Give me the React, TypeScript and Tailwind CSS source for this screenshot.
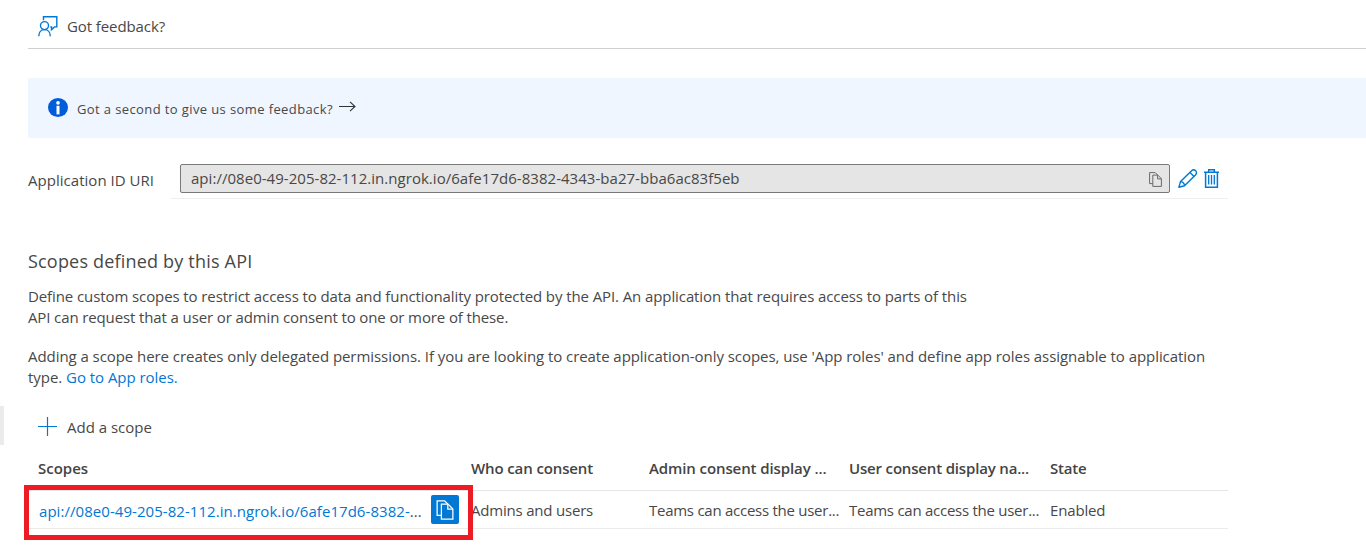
import type { ReactNode } from "react";

function FeedbackIcon() {
  return (
    <svg width="20" height="21" viewBox="0 0 20 21" fill="none" stroke="#0078d4" strokeWidth="1.4">
      <path d="M5.5 4.2V.7h13.3v10.2h-2.3l-3 2.7v-2.7h-1.3" />
      <circle cx="6.5" cy="9.6" r="4" />
      <path d="M.8 20.2c0-4 2.3-6.6 5.7-6.6s5.8 2.6 5.8 6.6" />
    </svg>
  );
}

function InfoIcon() {
  return (
    <svg width="20" height="19" viewBox="0 0 20 19">
      <ellipse cx="10" cy="9.5" rx="10" ry="9.5" fill="#015cda" />
      <circle cx="10" cy="4.9" r="1.8" fill="#fff" />
      <rect x="8.5" y="7.8" width="3" height="8.6" fill="#fff" />
    </svg>
  );
}

function CopyIcon({ width, height, sw }: { width: number; height: number; sw: number }) {
  return (
    <svg width={width} height={height} viewBox="0 0 13 15" fill="none" stroke="currentColor" strokeWidth={sw}>
      <path d="M3.8 11.6H.6V.6h5.6l2.4 2.4" />
      <path d="M3.8 3.1h5l3.6 3.6v7.7H3.8z" />
      <path d="M8.6 3.1v3.8h3.8" />
    </svg>
  );
}

function PencilIcon() {
  return (
    <svg width="20" height="19" viewBox="0 0 20 19" fill="none" stroke="#0078d4" strokeWidth="1.4" strokeLinejoin="round">
      <path d="M.9 18.2l1.6-5.6L13.6 1.7a2.7 2.7 0 0 1 4.1 4L6.5 16.7z" />
      <path d="M12 3.4l4 4M2.5 12.6c2 0 4 2 4 4.1" />
    </svg>
  );
}

function TrashIcon() {
  return (
    <svg width="15" height="19" viewBox="0 0 15 19" fill="none" stroke="#0078d4" strokeWidth="1.5">
      <path d="M0 3.2h15M4.7 3V.8h5.6V3M1.6 3.2v15h11.8v-15" />
      <path d="M4.7 6v9.6M7.5 6v9.6M10.3 6v9.6" strokeWidth="1.3" />
    </svg>
  );
}

function Row({ children, className }: { children: ReactNode; className: string }) {
  return (
    <div className={`grid w-[1200px] grid-cols-[443px_178px_200px_201px_178px] border-b whitespace-nowrap ${className}`}>
      {children}
    </div>
  );
}

export default function App() {
  return (
    <main className="relative h-[549px] w-[1366px] overflow-hidden bg-white pl-7 font-['Open_Sans',sans-serif] text-[15px] leading-[21px] text-[#484848]">
      <div className="flex h-[49px] items-start border-b border-[#d2d0ce] pt-4 pl-[10px]">
        <FeedbackIcon />
        <span className="ml-[9px] tracking-[-0.09px]">Got feedback?</span>
      </div>

      <div className="mt-[29px] flex h-[60px] rounded-l-[2px] bg-[#eff6ff] pt-5 pl-5">
        <InfoIcon />
        <span className="mt-px ml-[9px] text-[13px] tracking-[0.39px]">Got a second to give us some feedback?</span>
        <svg className="mt-[3px] ml-[6px]" width="17" height="12" viewBox="0 0 17 12" fill="none" stroke="#333" strokeWidth="1.1">
          <path d="M0 5.5h16M11 .8l5 4.7-5 4.7" />
        </svg>
      </div>

      <div className="mt-[26px] flex h-[35px] w-[1200px]">
        <div className="w-[143px] pt-[6px] tracking-[0.03px]">Application ID URI</div>
        <div className="flex flex-1 border-b border-[#f0efee] pl-[9px]">
          <div className="flex h-[29px] w-[990px] items-start justify-between rounded-[2px] border border-[#797979] bg-[#e5e5e5] pr-[7px] pl-[10px]">
            <span className="pt-[3px] tracking-[0.035px]">
              api://08e0-49-205-82-112.in.ngrok.io/6afe17d6-8382-4343-ba27-bba6ac83f5eb
            </span>
            <span className="mt-[7px] text-[#6b6967]">
              <CopyIcon width={13} height={15} sw={1} />
            </span>
          </div>
          <div className="flex gap-[6px] pt-[5px] pl-2">
            <PencilIcon />
            <TrashIcon />
          </div>
        </div>
      </div>

      <h2 className="mt-[50px] h-6 text-[18px] leading-6 tracking-[0.19px]">Scopes defined by this API</h2>
      <p className="mt-[13px] whitespace-nowrap">
        <span className="tracking-[-0.095px]">
          Define custom scopes to restrict access to data and functionality protected by the API. An application that requires access to parts of this
        </span>
        <br />
        <span className="tracking-[-0.12px]">API can request that a user or admin consent to one or more of these.</span>
      </p>
      <p className="mt-[18px] whitespace-nowrap">
        <span className="tracking-[-0.06px]">
          Adding a scope here creates only delegated permissions. If you are looking to create application-only scopes, use 'App roles' and define app roles assignable to application
        </span>
        <br />
        <span className="tracking-[-0.04px]">
          type. <a className="text-[#0078d4]">Go to App roles.</a>
        </span>
      </p>

      <div className="mt-[29px] flex h-[21px] items-start pl-[10px]">
        <svg width="19" height="19" viewBox="0 0 19 19" stroke="#0078d4" strokeWidth="1.2">
          <path d="M9.5 0v19M0 9.5h19" />
        </svg>
        <span className="ml-[10px]">Add a scope</span>
      </div>

      <Row className="mt-5 h-[33px] border-[#e5e5e5] font-semibold text-[#444]">
        <span className="pl-[10px]">Scopes</span>
        <span className="tracking-[-0.12px]">Who can consent</span>
        <span className="tracking-[-0.1px]">Admin consent display ...</span>
        <span className="tracking-[-0.17px]">User consent display na...</span>
        <span className="tracking-[-0.2px]">State</span>
      </Row>
      <Row className="h-[38px] border-[#edebe9]">
        <div className="flex pt-1 pl-[11px]">
          <span className="w-[392px] pt-[6px] tracking-[0.05px]">
            <a className="text-[#0078d4]">api://08e0-49-205-82-112.in.ngrok.io/6afe17d6-8382-</a>...
          </span>
          <button className="flex h-[29px] w-7 items-center justify-center rounded-[2px] bg-[#0078d4] text-white">
            <CopyIcon width={18} height={20} sw={0.95} />
          </button>
        </div>
        <span className="pt-[9px] tracking-[-0.2px]">Admins and users</span>
        <span className="pt-[9px] tracking-[-0.26px]">Teams can access the user...</span>
        <span className="pt-[9px] tracking-[-0.26px]">Teams can access the user...</span>
        <span className="pt-[9px] tracking-[-0.15px]">Enabled</span>
      </Row>

      <div className="absolute top-[406px] left-0 h-[39px] w-1 bg-[#edebe9]" />
      <div className="absolute top-[485px] left-6 h-[55px] w-[449px] border-[5px] border-[#ed1c24]" />
    </main>
  );
}
